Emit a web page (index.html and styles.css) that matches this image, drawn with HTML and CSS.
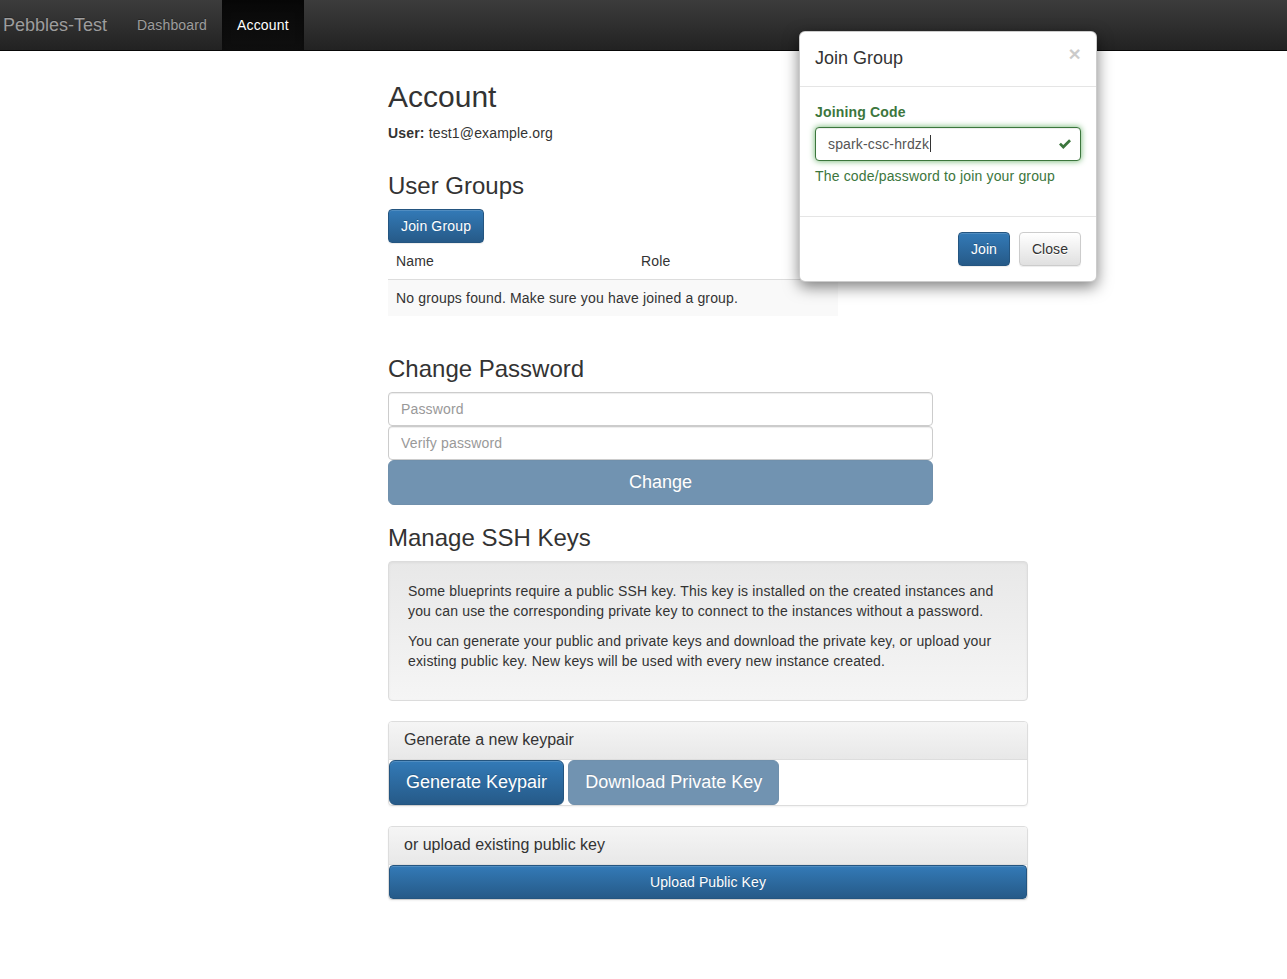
FILE: index.html
```html
<!DOCTYPE html>
<html lang="en">
<head>
<meta charset="utf-8">
<title>Pebbles-Test</title>
<link rel="stylesheet" href="styles.css">
</head>
<body>
<nav class="navbar">
  <a class="brand" href="#">Pebbles-Test</a>
  <ul class="nav">
    <li><a href="#">Dashboard</a></li>
    <li class="active"><a href="#">Account</a></li>
  </ul>
</nav>

<main class="main">
  <section class="section">
    <h2 class="title">Account</h2>
    <p class="user"><b>User:</b> test1@example.org</p>
  </section>

  <section class="section">
    <h3 class="sub">User Groups</h3>
    <button class="btn btn-primary">Join Group</button>
    <table class="table">
      <thead>
        <tr><th class="c-name">Name</th><th class="c-role">Role</th></tr>
      </thead>
      <tbody>
        <tr><td colspan="2">No groups found. Make sure you have joined a group.</td></tr>
      </tbody>
    </table>
  </section>

  <section class="section">
    <h3 class="sub">Change Password</h3>
    <form class="pw-form">
      <input class="form-control" type="password" placeholder="Password">
      <input class="form-control" type="password" placeholder="Verify password">
      <button class="btn btn-primary btn-lg btn-block" disabled>Change</button>
    </form>
  </section>

  <section class="section">
    <h3 class="sub">Manage SSH Keys</h3>
    <div class="well">
      <p>Some blueprints require a public SSH key. This key is installed on the created instances and you can use the corresponding private key to connect to the instances without a password.</p>
      <p>You can generate your public and private keys and download the private key, or upload your existing public key. New keys will be used with every new instance created.</p>
    </div>

    <div class="panel">
      <div class="panel-heading">Generate a new keypair</div>
      <div class="panel-body"><button class="btn btn-primary btn-lg">Generate Keypair</button> <button class="btn btn-primary btn-lg" disabled>Download Private Key</button></div>
    </div>

    <div class="panel">
      <div class="panel-heading">or upload existing public key</div>
      <div class="panel-body"><button class="btn btn-primary btn-block">Upload Public Key</button></div>
    </div>
  </section>
</main>

<div class="modal">
  <div class="modal-header">
    <button class="close" type="button">&times;</button>
    <h4 class="modal-title">Join Group</h4>
  </div>
  <div class="modal-body">
    <label class="label-success">Joining Code</label>
    <div class="feedback-wrap">
      <div class="form-control success">spark-csc-hrdzk<span class="caret"></span></div>
      <svg class="check" width="14" height="14" viewBox="0 0 14 14"><path d="M1 7.6 L2.9 5.7 L5.3 8.1 L11.1 2.3 L13 4.2 L5.3 11.9 Z" fill="#3c763d"/></svg>
    </div>
    <p class="help">The code/password to join your group</p>
  </div>
  <div class="modal-footer">
    <button class="btn btn-primary">Join</button> <button class="btn btn-default">Close</button>
  </div>
</div>
</body>
</html>
```
FILE: styles.css
```css
* { box-sizing: border-box; }
html, body { margin: 0; }
body {
  font-family: "Liberation Sans", Arial, sans-serif;
  font-size: 14px;
  line-height: 20px;
  letter-spacing: 0.16px;
  color: #333;
  background: #fff;
}
button, input { font-family: inherit; letter-spacing: inherit; }

.navbar {
  display: flex;
  height: 51px;
  background: linear-gradient(to bottom, #3c3c3c 0, #222 100%);
  border-bottom: 1px solid #080808;
}
.brand {
  padding: 15px 15px 15px 3px;
  font-size: 18px;
  line-height: 20px;
  letter-spacing: 0;
  color: #9d9d9d;
  text-decoration: none;
  text-shadow: 0 -1px 0 rgba(0,0,0,.25);
}
.nav { display: flex; margin: 0; padding: 0; list-style: none; }
.nav a {
  display: block;
  padding: 15px;
  line-height: 20px;
  color: #9d9d9d;
  text-decoration: none;
  text-shadow: 0 -1px 0 rgba(0,0,0,.25);
}
.nav .active a {
  color: #fff;
  background: linear-gradient(to bottom, #080808 0, #0f0f0f 100%);
  box-shadow: inset 0 3px 9px rgba(0,0,0,.25);
  height: 50px;
}

.main { margin-left: 388px; width: 640px; padding-bottom: 40px; }
.section { display: flow-root; }
.title {
  margin: 29px 0 10px;
  font-size: 30px;
  font-weight: 500;
  line-height: 33px;
  letter-spacing: 0;
}
.user { margin: 0 0 10px; }
.sub {
  margin: 20px 0 9.6px;
  font-size: 24px;
  font-weight: 500;
  line-height: 26.4px;
  letter-spacing: 0;
}

.btn {
  display: inline-block;
  padding: 6px 12px;
  font-size: 14px;
  line-height: 20px;
  border: 1px solid transparent;
  border-radius: 4px;
  cursor: pointer;
  vertical-align: middle;
  text-align: center;
}
.btn-primary {
  color: #fff;
  background: linear-gradient(to bottom, #337ab7 0, #265a88 100%);
  border-color: #245580;
  text-shadow: 0 -1px 0 rgba(0,0,0,.2);
  box-shadow: inset 0 1px 0 rgba(255,255,255,.15), 0 1px 1px rgba(0,0,0,.075);
}
.btn-primary:disabled {
  background: #265a88;
  opacity: .65;
  box-shadow: none;
  cursor: not-allowed;
}
.btn-default {
  color: #333;
  background: linear-gradient(to bottom, #fff 0, #e0e0e0 100%);
  border-color: #ccc;
  text-shadow: 0 1px 0 #fff;
  box-shadow: inset 0 1px 0 rgba(255,255,255,.15), 0 1px 1px rgba(0,0,0,.075);
}
.btn-lg {
  padding: 10px 16px;
  font-size: 18px;
  line-height: 23px;
  letter-spacing: 0;
  border-radius: 6px;
}
.btn-block { display: block; width: 100%; }

.table {
  width: 450px;
  border-collapse: collapse;
  margin-bottom: 20px;
}
.table th, .table td {
  padding: 8px;
  text-align: left;
  font-weight: normal;
  line-height: 20px;
}
.table thead th { border-bottom: 1px solid #ddd; }
.table tbody tr { background: #f9f9f9; }
.c-name { width: 245px; }

.pw-form { width: 545px; margin: 0; }
.form-control {
  display: block;
  width: 100%;
  height: 34px;
  padding: 6px 12px;
  font-size: 14px;
  line-height: 20px;
  color: #555;
  background: #fff;
  border: 1px solid #ccc;
  border-radius: 4px;
  box-shadow: inset 0 1px 1px rgba(0,0,0,.075);
}
.form-control::placeholder { color: #999; }

.well {
  padding: 19px;
  margin-bottom: 20px;
  background: linear-gradient(to bottom, #e8e8e8 0, #f5f5f5 100%);
  border: 1px solid #dcdcdc;
  border-radius: 4px;
  box-shadow: inset 0 1px 3px rgba(0,0,0,.05), 0 1px 0 rgba(255,255,255,.1);
}
.well p { margin: 0 0 10px; }

.panel {
  margin-bottom: 20px;
  background: #fff;
  border: 1px solid #ddd;
  border-radius: 4px;
  box-shadow: 0 1px 2px rgba(0,0,0,.05);
}
.panel-heading {
  padding: 9px 15px 10px;
  font-size: 16px;
  line-height: 18px;
  letter-spacing: 0;
  background: linear-gradient(to bottom, #f5f5f5 0, #e8e8e8 100%);
  border-bottom: 1px solid #ddd;
  border-radius: 3px 3px 0 0;
}
.panel-body { font-size: 0; }
.panel-body .btn { font-size: 18px; }
.panel-body .btn + .btn { margin-left: 4px; }
.panel-body .btn-block { font-size: 14px; letter-spacing: 0.1px; }

.modal {
  position: absolute;
  top: 31px;
  left: 799px;
  width: 298px;
  background: #fff;
  border: 1px solid rgba(0,0,0,.2);
  border-radius: 6px;
  box-shadow: 0 5px 15px rgba(0,0,0,.5);
}
.modal-header {
  padding: 14px 15px 15px;
  border-bottom: 1px solid #e5e5e5;
}
.modal-title {
  margin: 0;
  font-size: 18px;
  font-weight: 500;
  line-height: 25px;
  letter-spacing: 0;
}
.close {
  float: right;
  margin-top: -3px;
  padding: 0;
  background: transparent;
  border: 0;
  font-size: 21px;
  font-weight: bold;
  line-height: 1;
  color: #000;
  opacity: .2;
  text-shadow: 0 1px 0 #fff;
  font-family: "Liberation Sans", Arial, sans-serif;
}
.modal-body { padding: 15px 15px 30px; }
.label-success {
  display: block;
  margin-bottom: 5px;
  font-weight: bold;
  color: #3c763d;
}
.feedback-wrap { position: relative; }
.form-control.success {
  border-color: #3c763d;
  box-shadow: inset 0 1px 1px rgba(0,0,0,.075), 0 0 6px #67b168;
  color: #555;
}
.caret {
  display: inline-block;
  width: 1px;
  height: 17px;
  margin-left: 1px;
  vertical-align: -3px;
  background: #333;
}
.check {
  position: absolute;
  right: 9px;
  top: 10px;
}
.help {
  margin: 5px 0 0;
  color: #3c763d;
}
.modal-footer {
  padding: 15px;
  text-align: right;
  border-top: 1px solid #e5e5e5;
}
.modal-footer .btn { letter-spacing: 0.05px; }
.modal-footer .btn + .btn { margin-left: 5px; }
```
